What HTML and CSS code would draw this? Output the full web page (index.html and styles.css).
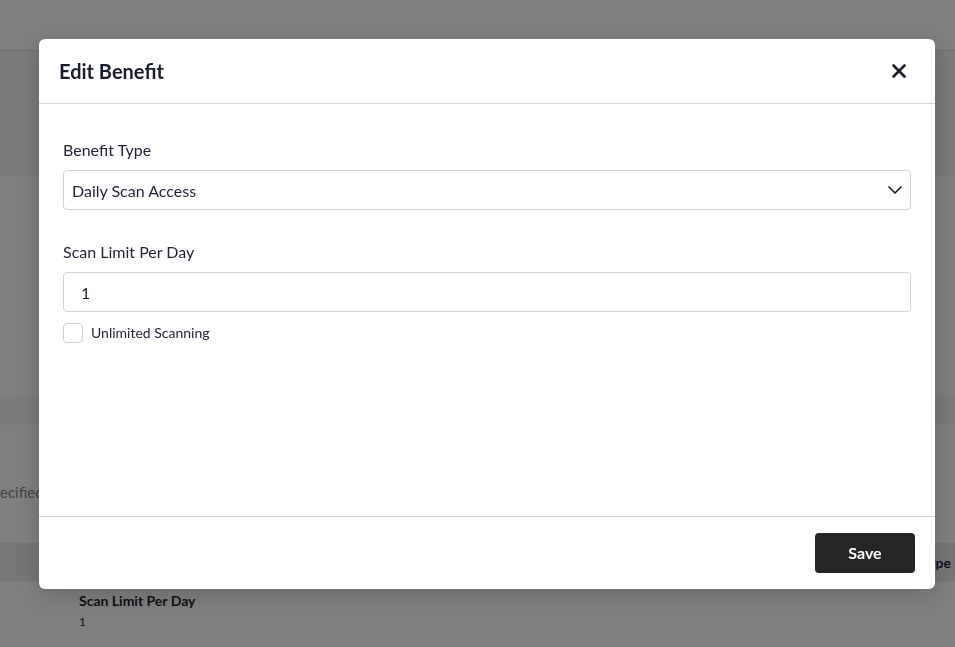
FILE: index.html
```html
<!DOCTYPE html>
<html lang="en">
<head>
<meta charset="utf-8">
<title>Edit Benefit</title>
<link rel="stylesheet" href="styles.css">
</head>
<body>
<div class="page">
  <div class="topbar"></div>
  <div class="hero"></div>
  <div class="section"></div>
  <div class="band"></div>
  <div class="filters"><span class="muted">ecified</span></div>
  <div class="thead"><span class="th">Type</span></div>
  <div class="trow">
    <div class="cell-title">Scan Limit Per Day</div>
    <div class="cell-value">1</div>
  </div>
</div>

<div class="overlay"></div>

<div class="modal" role="dialog" aria-labelledby="modal-title">
  <div class="modal-header">
    <h2 id="modal-title" class="modal-title">Edit Benefit</h2>
    <button class="close-btn" aria-label="Close">
      <svg width="14" height="14" viewBox="0 0 14 14"><path d="M1.5 1.5 L12.5 12.5 M12.5 1.5 L1.5 12.5" stroke="#1a1c2b" stroke-width="2.6" stroke-linecap="round" fill="none"/></svg>
    </button>
  </div>
  <div class="modal-body">
    <div class="form-group">
      <label class="field-label">Benefit Type</label>
      <div class="select">
        <span class="select-value">Daily Scan Access</span>
        <svg class="chevron" width="16" height="10" viewBox="0 0 16 10"><path d="M2 2 L8 8 L14 2" stroke="#1a1c2b" stroke-width="1.7" stroke-linecap="round" stroke-linejoin="round" fill="none"/></svg>
      </div>
    </div>
    <div class="form-group">
      <label class="field-label">Scan Limit Per Day</label>
      <div class="input">1</div>
      <div class="check-row">
        <span class="checkbox"></span>
        <span class="check-label">Unlimited Scanning</span>
      </div>
    </div>
  </div>
  <div class="modal-footer">
    <button class="save-btn">Save</button>
  </div>
</div>
</body>
</html>
```

FILE: styles.css
```css
* { box-sizing: border-box; }

html, body {
  margin: 0;
  padding: 0;
  height: 100%;
  overflow: hidden;
}

body {
  font-family: Lato, "Noto Sans", "Liberation Sans", sans-serif;
  background: #ffffff;
  color: #1d2033;
}

.page {
  display: flex;
  flex-direction: column;
}

.topbar {
  height: 51px;
  background: #ffffff;
  border-bottom: 1px solid #dcdde2;
}

.hero {
  height: 125px;
  background: #f4f4f4;
}

.section {
  height: 220px;
  background: #ffffff;
}

.band {
  height: 29px;
  background: #f4f4f5;
}

.filters {
  height: 118px;
  display: flex;
  align-items: center;
  padding-top: 16px;
}

.muted {
  font-size: 15px;
  color: #858585;
}

.thead {
  height: 38px;
  background: #eaecf1;
  display: flex;
  align-items: center;
  justify-content: flex-end;
  padding-right: 4px;
}

.th {
  font-size: 14px;
  font-weight: 700;
  color: #22243a;
}

.trow {
  padding: 11px 79px;
}

.cell-title {
  font-size: 14px;
  font-weight: 700;
  color: #1e1f28;
  line-height: 18px;
}

.cell-value {
  font-size: 12px;
  color: #1e1f28;
  margin-top: 4px;
}

.overlay {
  position: fixed;
  inset: 0;
  background: rgba(0, 0, 0, 0.5);
}

.modal {
  position: fixed;
  left: 39px;
  top: 39px;
  width: 896px;
  height: 550px;
  background: #ffffff;
  border-radius: 6px;
  box-shadow: 0 6px 24px rgba(0, 0, 0, 0.18);
  display: flex;
  flex-direction: column;
}

.modal-header {
  height: 65px;
  flex: none;
  display: flex;
  align-items: center;
  justify-content: space-between;
  padding: 0 29px 0 20px;
  border-bottom: 1px solid #d3d5da;
}

.modal-title {
  margin: 0;
  font-size: 20px;
  font-weight: 700;
  color: #1a1d2e;
}

.close-btn {
  background: none;
  border: none;
  padding: 0;
  width: 14px;
  height: 14px;
  display: flex;
  cursor: pointer;
}

.modal-body {
  flex: 1;
  padding: 34px 24px 0 24px;
}

.form-group {
  margin-bottom: 30px;
}

.field-label {
  display: block;
  font-size: 16px;
  line-height: 24px;
  color: #1f2235;
  margin-bottom: 8px;
}

.select, .input {
  height: 40px;
  border: 1px solid #cfd2d8;
  border-radius: 4px;
  display: flex;
  align-items: center;
  font-size: 16px;
  color: #1f2235;
}

.select {
  justify-content: space-between;
  padding: 0 7px 0 8px;
}

.input {
  padding: 0 17px;
}

.check-row {
  display: flex;
  align-items: center;
  gap: 8px;
  margin-top: 11px;
}

.checkbox {
  width: 20px;
  height: 20px;
  border: 1px solid #cfd2d8;
  border-radius: 4px;
  background: #ffffff;
}

.check-label {
  font-size: 14px;
  line-height: 18px;
  color: #1f2235;
  padding-bottom: 1px;
}

.modal-footer {
  flex: none;
  height: 73px;
  border-top: 1px solid #d3d5da;
  display: flex;
  align-items: center;
  justify-content: flex-end;
  padding: 0 20px;
}

.save-btn {
  width: 100px;
  height: 40px;
  background: #262626;
  color: #ffffff;
  border: none;
  border-radius: 4px;
  font-family: Lato, "Noto Sans", "Liberation Sans", sans-serif;
  font-size: 16px;
  font-weight: 700;
  padding: 0 0 2px 0;
  cursor: pointer;
}
```
